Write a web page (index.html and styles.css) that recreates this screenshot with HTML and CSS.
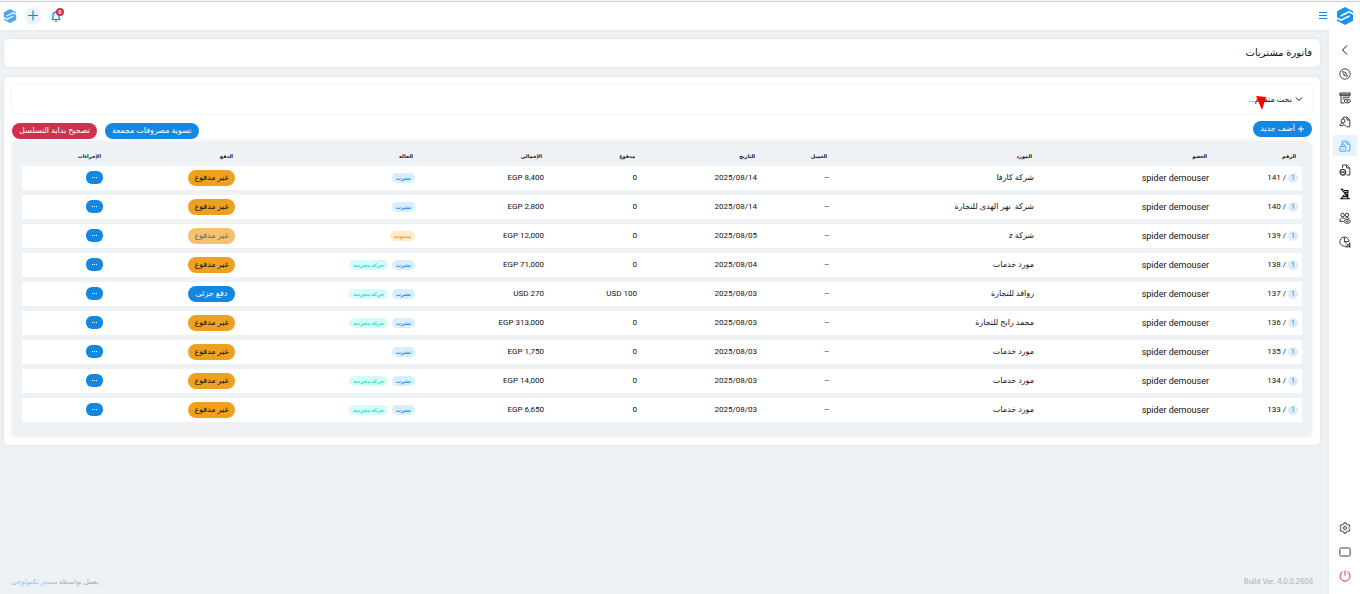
FILE: index.html
```html
<!DOCTYPE html>
<html lang="ar" dir="rtl">
<head>
<meta charset="utf-8">
<meta name="viewport" content="width=device-width, initial-scale=1">
<title>فاتورة مشتريات</title>
<link rel="stylesheet" href="styles.css">
</head>
<body>
<svg class="defs" width="0" height="0" aria-hidden="true">
  <symbol id="logo" viewBox="0 0 18 18">
    <path fill="currentColor" d="M9 0 17 4.200v9.600L9 18 1 13.800V4.200z"/>
    <path fill="none" stroke="#fff" stroke-width="1.600" d="M4.500 9 13 4.800 18 7.400M0 10.600 5 13.200 13.500 9"/>
  </symbol>
</svg>
<div class="app">
  <aside class="sidebar">
    <a class="brand" href="#" aria-label="Spider"><svg viewBox="0 0 18 18"><use href="#logo"/></svg></a>
    <button class="side-item back" type="button" aria-label="رجوع"><svg viewBox="0 0 12 12"><path d="M8 1.500 3.500 6 8 10.500"/></svg></button>
    <nav class="side-nav">
      <a class="side-item" href="#" aria-label="الرئيسية"><svg viewBox="0 0 12 12"><circle cx="6" cy="6" r="5.200" stroke-width=".9"/><path stroke-width=".8" d="M3.400 3.400 7 4.800 8.600 8.600 5 7.200zM5 7.200 7 4.800"/></svg></a>
      <a class="side-item" href="#" aria-label="المتجر"><svg viewBox="0 0 12 12"><path d="M.8 1h10.400v2.400H.8zM1 2.200h10M2 3.600V11h3.400M3.600 5.200h5.600M3.600 7h2.400M10 3.600v2.200"/><ellipse cx="8.400" cy="9" rx="3" ry="2"/><circle cx="8.400" cy="9" r=".7"/></svg></a>
      <a class="side-item" href="#" aria-label="المبيعات"><svg viewBox="0 0 12 12"><path d="M4.200 3V1.200h4l2.600 2.600v7H7.600M8 1.400V4h2.600"/><circle cx="4" cy="5" r="2"/><path d="M.9 9.400c0-1.600 1.200-2.200 2.500-2.200M3.400 7.200 7.400 10.600M.9 9.600h3.600"/></svg></a>
      <a class="side-item active" href="#" aria-label="المشتريات" aria-current="page"><svg viewBox="0 0 12 12"><path d="M3.200 4.400V1.200h4.600l3 2.800v7H8M7.600 1.400v2.800h3"/><path d="M1 6.400h5.800v4.800H1zM2.400 6.200V5c0-1.600 3-1.600 3 0v1.200M3.900 8v1.600"/></svg></a>
      <a class="side-item" href="#" aria-label="المرتجعات"><svg viewBox="0 0 12 12"><path d="M3.600 4V1h4.200l3 2.800V11H7.600M7.600 1.200V4h3"/><circle cx="3.900" cy="8.200" r="2.800" stroke-width="1.300"/><path d="M2.200 8.200h3.400" stroke-width="1.500"/></svg></a>
      <a class="side-item dark" href="#" aria-label="المصروفات"><svg viewBox="0 0 12 12"><path d="M1.500 1.200h3M2.600 1.200 9.400 10M5 2.600h4.600M8.800 3v7.600M4.600 4.600h4.600M6 6.600h3M1 10.800h10M5.400 6.600 2.400 10.600M4.400 8.600H9" stroke-width="1.100"/></svg></a>
      <a class="side-item" href="#" aria-label="العملاء"><svg viewBox="0 0 12 12"><circle cx="3.600" cy="3" r="1.800"/><circle cx="8" cy="3" r="1.800"/><path d="M.8 9.400c0-2.400 1-3.600 2.800-3.600 1.200 0 2 .5 2.400 1.400M.8 9.400h3.800M6.600 5.800c1.800-.4 3.400.2 3.800 1.400"/><ellipse cx="8.200" cy="9.400" rx="3" ry="1.900"/><circle cx="8.200" cy="9.400" r=".6"/></svg></a>
      <a class="side-item" href="#" aria-label="التقارير"><svg viewBox="0 0 12 12"><path d="M6 10.200A4.600 4.600 0 1 1 10 5M5.400 1v4.800l2.400 2M5.400 5.600H10"/><path d="M7.200 11.400V9.600M8.900 11.400V8M10.700 11.400V6.400" stroke-width="1.400"/></svg></a>
    </nav>
    <div class="side-end">
      <button class="side-item" type="button" aria-label="الإعدادات"><svg viewBox="0 0 12 12"><path d="M5 .8h2l.4 1.500 1.200.7 1.500-.4 1 1.700L10 5.400v1.200l1.100 1.100-1 1.700-1.500-.4-1.200.7L7 11.200H5l-.4-1.500L3.400 9l-1.500.4-1-1.700L2 6.600V5.400L.9 4.300l1-1.700 1.500.4 1.200-.7z"/><circle cx="6" cy="6" r="1.500"/></svg></button>
      <button class="side-item" type="button" aria-label="ملء الشاشة"><svg viewBox="0 0 12 12"><rect x=".8" y="2" width="10.400" height="8" rx="1.500"/></svg></button>
      <button class="side-item power" type="button" aria-label="خروج"><svg viewBox="0 0 12 12"><path d="M6 .6v5M3.700 1.700a5 5 0 1 0 4.600 0"/></svg></button>
    </div>
  </aside>

  <div class="page">
    <header class="topbar">
      <button class="menu" type="button" aria-label="القائمة"><svg viewBox="0 0 10 10"><path d="M1 1.500h8M1 4.500h8M1 7.500h8"/></svg></button>
      <div class="top-actions">
        <button class="round bell" type="button" aria-label="الإشعارات"><svg viewBox="0 0 12 12"><path d="M1.500 9.500h9M3 9.500V5.500C3 3.400 4.200 2.200 6 2.200s3 1.200 3 3.300v4M5 11.200h2M6 1v1"/></svg><span class="count">0</span></button>
        <button class="round" type="button" aria-label="إضافة"><svg viewBox="0 0 12 12"><path d="M6 .5v10M1 5.500h10"/></svg></button>
        <a class="mini" href="#" aria-label="الحساب"><svg viewBox="0 0 18 18"><use href="#logo"/></svg></a>
      </div>
    </header>

    <main class="content">
      <h1 class="card title">فاتورة مشتريات</h1>
      <section class="card body">
        <button class="search" type="button"><svg viewBox="0 0 8 8"><path d="M1 2.500 4 5.500 7 2.500"/></svg><span>بحث متقدم...</span><svg class="pointer" viewBox="0 0 10 14"><path d="M0 0 10 1 6 14z"/></svg></button>
        <div class="toolbar">
          <button class="btn add blue" type="button"><svg viewBox="0 0 8 8"><path d="M4 1v6M1 4h6"/></svg>أضف جديد</button>
          <div class="group">
            <button class="btn blue" type="button">تسوية مصروفات مجمعة</button>
            <button class="btn red" type="button">تصحيح بداية التسلسل</button>
          </div>
        </div>
        <div class="panel">
          <table class="grid">
            <colgroup><col class="c-no"><col class="c-user"><col class="c-sup"><col class="c-cli"><col class="c-date"><col class="c-paid"><col class="c-total"><col class="c-state"><col class="c-pay"><col class="c-act"></colgroup>
            <thead><tr><th>الرقم</th><th>العضو</th><th>المورد</th><th>العميل</th><th>التاريخ</th><th>مدفوع</th><th>الإجمالى</th><th>الحالة</th><th>الدفع</th><th>الإجراءات</th></tr></thead>
            <tbody>
              <tr><td><span class="num">1</span> / 141</td><td class="user">spider demouser</td><td>شركة كارفا</td><td>--</td><td><bdi dir="ltr">2025/08/14</bdi></td><td>0</td><td><bdi dir="ltr">EGP 8,400</bdi></td><td><span class="tag info">نشرت</span></td><td><button class="pay due" type="button">غير مدفوع</button></td><td><button class="more" type="button" aria-label="إجراءات"><i></i><i></i><i></i></button></td></tr>
              <tr><td><span class="num">1</span> / 140</td><td class="user">spider demouser</td><td>شركة&nbsp; نهر الهدى للتجارة</td><td>--</td><td><bdi dir="ltr">2025/08/14</bdi></td><td>0</td><td><bdi dir="ltr">EGP 2,800</bdi></td><td><span class="tag info">نشرت</span></td><td><button class="pay due" type="button">غير مدفوع</button></td><td><button class="more" type="button" aria-label="إجراءات"><i></i><i></i><i></i></button></td></tr>
              <tr><td><span class="num">1</span> / 139</td><td class="user">spider demouser</td><td>شركة z</td><td>--</td><td><bdi dir="ltr">2025/08/05</bdi></td><td>0</td><td><bdi dir="ltr">EGP 12,000</bdi></td><td><span class="tag draft">مسودة</span></td><td><button class="pay due" type="button" disabled>غير مدفوع</button></td><td><button class="more" type="button" aria-label="إجراءات"><i></i><i></i><i></i></button></td></tr>
              <tr><td><span class="num">1</span> / 138</td><td class="user">spider demouser</td><td>مورد خدمات</td><td>--</td><td><bdi dir="ltr">2025/08/04</bdi></td><td>0</td><td><bdi dir="ltr">EGP 71,000</bdi></td><td><span class="tag info">نشرت</span><span class="tag stock">حركة مخزنية</span></td><td><button class="pay due" type="button">غير مدفوع</button></td><td><button class="more" type="button" aria-label="إجراءات"><i></i><i></i><i></i></button></td></tr>
              <tr><td><span class="num">1</span> / 137</td><td class="user">spider demouser</td><td>روافد للتجارة</td><td>--</td><td><bdi dir="ltr">2025/08/03</bdi></td><td><bdi dir="ltr">USD 100</bdi></td><td><bdi dir="ltr">USD 270</bdi></td><td><span class="tag info">نشرت</span><span class="tag stock">حركة مخزنية</span></td><td><button class="pay part" type="button">دفع جزئى</button></td><td><button class="more" type="button" aria-label="إجراءات"><i></i><i></i><i></i></button></td></tr>
              <tr><td><span class="num">1</span> / 136</td><td class="user">spider demouser</td><td>محمد رابح للتجارة</td><td>--</td><td><bdi dir="ltr">2025/08/03</bdi></td><td>0</td><td><bdi dir="ltr">EGP 313,000</bdi></td><td><span class="tag info">نشرت</span><span class="tag stock">حركة مخزنية</span></td><td><button class="pay due" type="button">غير مدفوع</button></td><td><button class="more" type="button" aria-label="إجراءات"><i></i><i></i><i></i></button></td></tr>
              <tr><td><span class="num">1</span> / 135</td><td class="user">spider demouser</td><td>مورد خدمات</td><td>--</td><td><bdi dir="ltr">2025/08/03</bdi></td><td>0</td><td><bdi dir="ltr">EGP 1,750</bdi></td><td><span class="tag info">نشرت</span></td><td><button class="pay due" type="button">غير مدفوع</button></td><td><button class="more" type="button" aria-label="إجراءات"><i></i><i></i><i></i></button></td></tr>
              <tr><td><span class="num">1</span> / 134</td><td class="user">spider demouser</td><td>مورد خدمات</td><td>--</td><td><bdi dir="ltr">2025/08/03</bdi></td><td>0</td><td><bdi dir="ltr">EGP 14,000</bdi></td><td><span class="tag info">نشرت</span><span class="tag stock">حركة مخزنية</span></td><td><button class="pay due" type="button">غير مدفوع</button></td><td><button class="more" type="button" aria-label="إجراءات"><i></i><i></i><i></i></button></td></tr>
              <tr><td><span class="num">1</span> / 133</td><td class="user">spider demouser</td><td>مورد خدمات</td><td>--</td><td><bdi dir="ltr">2025/08/03</bdi></td><td>0</td><td><bdi dir="ltr">EGP 6,650</bdi></td><td><span class="tag info">نشرت</span><span class="tag stock">حركة مخزنية</span></td><td><button class="pay due" type="button">غير مدفوع</button></td><td><button class="more" type="button" aria-label="إجراءات"><i></i><i></i><i></i></button></td></tr>
            </tbody>
          </table>
        </div>
      </section>
    </main>

    <footer class="footer">
      <bdi class="build" dir="ltr">Build Ver. 4.0.0.2608</bdi>
      <span>يعمل بواسطة <a href="#">سبيدر تكنولوجى</a></span>
    </footer>
  </div>
</div>
</body>
</html>
```
FILE: styles.css
```css
:root {
  --blue: #1388e3;
  --red: #d03050;
  --orange: #f0a020;
  --bg: #eef2f5;
}
* { box-sizing: border-box; }
body {
  margin: 0;
  background: var(--bg);
  color: #111;
  font-family: Roboto, "DejaVu Sans", sans-serif;
  font-size: 8px;
}
button {
  margin: 0;
  padding: 0;
  border: 0;
  background: none;
  color: inherit;
  font: inherit;
  cursor: pointer;
}
a { color: inherit; text-decoration: none; }
svg { display: block; fill: none; stroke: currentColor; }
.defs { position: absolute; }

.app { display: flex; min-height: 100vh; border-top: 1px solid #fff; }

.sidebar {
  display: flex;
  flex-direction: column;
  align-items: center;
  flex: none;
  width: 31px;
  padding: 5px 0 8px;
  border-top: 1px solid #ccc;
  background: #fff;
  color: #3c3c3c;
  box-shadow: 0 0 4px rgba(0, 0, 0, .06);
}
.brand { margin-bottom: 14px; color: #1b93f0; }
.brand svg { width: 18px; height: 18px; stroke: none; }
.side-item {
  display: flex;
  align-items: center;
  justify-content: center;
  width: 24px;
  height: 21px;
  margin-bottom: 3px;
}
.side-item svg { width: 12px; height: 12px; stroke-width: 1; }
.side-item.active { background: #e7f4fe; color: #49aaf2; }
.back, .dark { color: #111; }
.side-end { margin-top: auto; }
.side-end .side-item:last-child { margin-bottom: 0; }
.side-item.power { color: var(--red); }

.page { display: flex; flex: 1; flex-direction: column; min-width: 0; }
.topbar {
  display: flex;
  align-items: center;
  justify-content: space-between;
  height: 29px;
  padding: 0 1px 0 3px;
  border-top: 1px solid #ccc;
  background: #fff;
  color: var(--blue);
  box-shadow: 0 0 4px rgba(0, 0, 0, .06);
}
.menu svg { width: 10px; height: 10px; }
.top-actions { display: flex; align-items: center; gap: 8px; }
.round {
  position: relative;
  display: flex;
  align-items: center;
  justify-content: center;
  width: 16px;
  height: 18px;
  border-radius: 9px;
  background: #eff2f5;
}
.round svg { width: 12px; height: 12px; stroke-width: 1.2; }
.bell { width: 14px; height: 14px; }
.count {
  position: absolute;
  top: -1px;
  right: -1px;
  width: 8px;
  height: 8px;
  border-radius: 4px;
  background: var(--red);
  color: #fff;
  font-size: 5px;
  font-weight: 700;
  line-height: 8px;
  text-align: center;
}
.mini { color: #4ba9f1; }
.mini svg { width: 14px; height: 14px; stroke: none; }

.content { display: flex; flex-direction: column; gap: 10px; padding: 9px 9px 0 4px; }
.card {
  margin: 0;
  border-radius: 5px;
  background: #fff;
  box-shadow: 0 0 4px rgba(0, 0, 0, .07);
}
.title { padding: 0 8px; font-size: 10px; font-weight: 400; line-height: 28px; }
.body { padding: 8px; }
.search {
  position: relative;
  display: flex;
  align-items: center;
  gap: 3px;
  width: 100%;
  height: 28px;
  padding: 0 9px;
  border-radius: 5px;
  box-shadow: 0 0 4px rgba(0, 0, 0, .07);
}
.search svg { width: 8px; height: 8px; }
.search .pointer {
  position: absolute;
  top: 11px;
  right: 46px;
  width: 10px;
  height: 14px;
  fill: #f00;
  stroke: none;
}
.toolbar { display: flex; justify-content: space-between; padding-top: 8px; }
.group { display: flex; gap: 8px; padding: 2px 0; }
.btn {
  height: 16px;
  padding: 0 7px;
  border-radius: 8px;
  color: #fff;
  line-height: 16px;
  white-space: nowrap;
}
.add { display: flex; align-items: center; gap: 2px; }
.add svg { width: 8px; height: 8px; }
.blue { background: var(--blue); }
.red { background: var(--red); }

.panel {
  padding: 5px 10px 10px;
  border-radius: 5px;
  background: var(--bg);
  box-shadow: 0 0 4px rgba(0, 0, 0, .07);
}
.grid { width: 100%; table-layout: fixed; border-collapse: separate; border-spacing: 0 5px; }
.c-no { width: 89px; }
.c-user { width: 175px; }
.c-sup { width: 205px; }
.c-cli { width: 72px; }
.c-date { width: 120px; }
.c-paid { width: 93px; }
.c-total { width: 129px; }
.c-state { width: 180px; }
.c-pay { width: 132px; }
.c-act { width: 85px; }
.grid th { height: 10px; padding: 0 6px; font-size: 5px; line-height: 10px; text-align: start; }
.grid td { height: 24px; padding: 0 4px; background: #fff; line-height: 16px; white-space: nowrap; }
.grid td.user { font-size: 9px; }
.num,
.tag {
  display: inline-block;
  height: 10px;
  margin-top: 3px;
  border-radius: 5px;
  line-height: 10px;
  vertical-align: top;
}
.num {
  width: 10px;
  background: #d9edfd;
  color: var(--blue);
  font-size: 7px;
  text-align: center;
}
.tag { margin-left: 4px; padding: 0 4px; font-size: 5px; font-weight: 700; }
.info { background: #d9edfd; color: var(--blue); }
.draft { background: #ffeacb; color: var(--orange); }
.stock { background: #d4fcf8; color: #2cdccb; }
.pay {
  width: 47px;
  height: 16px;
  border-radius: 8px;
  line-height: 16px;
  vertical-align: middle;
}
.due { background: var(--orange); color: #111; }
.due:disabled { opacity: .65; }
.part { background: var(--blue); color: #fff; }
.more {
  display: inline-flex;
  align-items: center;
  justify-content: center;
  gap: 1px;
  width: 17px;
  height: 13px;
  border-radius: 6px;
  background: var(--blue);
  vertical-align: middle;
}
.more i { width: 1px; height: 1px; background: #fff; }

.footer {
  display: flex;
  justify-content: space-between;
  margin-top: auto;
  padding: 0 16px 5px 11px;
  color: #a9adb0;
  font-size: 7px;
  line-height: 14px;
}
.footer a { color: #8fc4ee; }
.build { font-family: Inter, sans-serif; }
```
